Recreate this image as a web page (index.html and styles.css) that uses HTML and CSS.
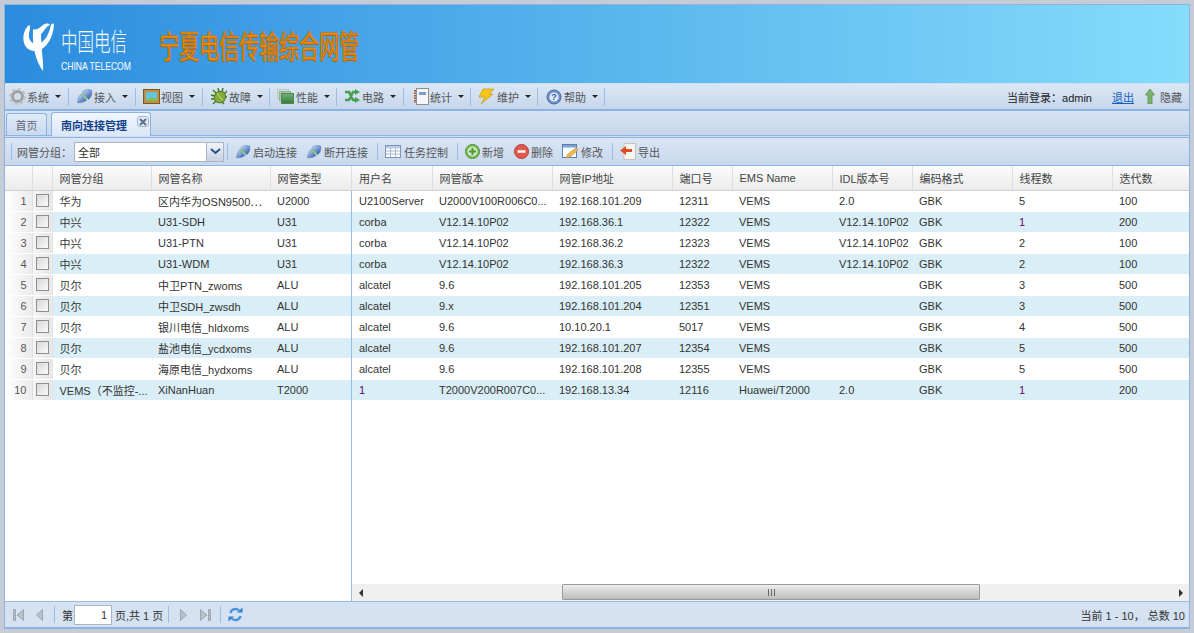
FILE: index.html
```html
<!DOCTYPE html>
<html>
<head>
	<meta charset="UTF-8">
	<title>宁夏电信传输综合网管</title>
	<link rel="stylesheet" href="styles.css">
</head>
<body>
	<svg class="defs" width="0" height="0">
		<defs>
			<linearGradient id="plugFill" x1="0" y1="0" x2="0" y2="1">
				<stop offset="0" stop-color="#b4cdf0"/>
				<stop offset="1" stop-color="#3f68ad"/>
			</linearGradient>
			<linearGradient id="stackFill" x1="0" y1="0" x2="0" y2="1">
				<stop offset="0" stop-color="#78b078"/>
				<stop offset="1" stop-color="#2f7a3a"/>
			</linearGradient>
			<symbol id="plug" viewBox="0 0 18 18">
				<g transform="rotate(-42 9 9)">
					<path d="M-1 9 C2 6.5 4 5 8 4.5 V13.5 C4 13 2 11.5 -1 9 Z" fill="url(#plugFill)" stroke="#5c7fb8" stroke-width=".5"/>
					<path d="M10 4 C14 3.5 17 5.5 19 9 C17 12.5 14 14.5 10 14 Z" fill="url(#plugFill)" stroke="#4d72ae" stroke-width=".5"/>
					<rect x="8" y="5" width="2" height="8" fill="#86c880"/>
				</g>
			</symbol>
		</defs>
	</svg>
	<div class="frame">
		<header class="banner">
			<div class="logo">
				<svg class="logo-mark" width="31" height="50" viewBox="0 0 31 50">
					<path d="M6 3 C0 8 -1.500 19 3 25 C7 30 14 30 19 27 C25 23 30 15 31 3 C31 1 29 1 28 3 C26 12 22 20 15 22 C9 23 5 18 6 11 C7 7 8 4 6 3 Z" fill="#fff"/>
					<path d="M10 9 C9 24 13 40 20 49 C21 42 18 28 18 10 Z" fill="#fff"/>
					<path d="M10 7 C14 9 17 5 20 3 C23 1 26 1 27 3 C24 4 22 7 20 10 C17 14 10 14 10 7 Z" fill="#fff"/>
				</svg>
				<div class="logo-text">
					<span class="logo-cn">中国电信</span>
					<span class="logo-en">CHINA TELECOM</span>
				</div>
			</div>
			<h1 class="app-title">宁夏电信传输综合网管</h1>
		</header>

		<nav class="menubar">
			<div class="menu-item">
				<svg class="ico" width="17" height="17" viewBox="0 0 17 17"><circle cx="8.500" cy="8.500" r="5" fill="none" stroke="#a0a0a0" stroke-width="3"/><circle cx="8.500" cy="8.500" r="7" fill="none" stroke="#bcbcbc" stroke-width="2.600" stroke-dasharray="2.600 2.900"/><circle cx="8.500" cy="8.500" r="2" fill="#d4dce6"/></svg>
				<span>系统</span><i class="caret"></i>
			</div>
			<div class="menu-item">
				<svg class="ico" width="17" height="17"><use href="#plug"/></svg>
				<span>接入</span><i class="caret"></i>
			</div>
			<div class="menu-item">
				<svg class="ico" width="17" height="15" viewBox="0 0 17 15"><rect x=".5" y=".5" width="16" height="14" fill="#c08f45" stroke="#7a5a22"/><rect x="3" y="3" width="11" height="9" fill="#63c4dc"/><path d="M3 12 C6 8 9 8 14 10 V12 Z" fill="#7fc04a"/></svg>
				<span>视图</span><i class="caret"></i>
			</div>
			<div class="menu-item">
				<svg class="ico" width="18" height="17" viewBox="0 0 18 17"><path d="M1 7 L5 8 M1 11 L5 11 M3 16 L6 13 M3 2 L6 5 M8 0 L9 4 M13 0 L12 4 M17 3 L14 6 M17 9 L15 9 M14 16 L12 14" stroke="#3f7a22" stroke-width="1.400" fill="none"/><ellipse cx="10" cy="9" rx="5.500" ry="6" transform="rotate(35 10 9)" fill="#86ad3c" stroke="#4d7a1c"/><path d="M7 5 L13 13" stroke="#c0d480" stroke-width="1"/></svg>
				<span>故障</span><i class="caret"></i>
			</div>
			<div class="menu-item">
				<svg class="ico" width="18" height="15" viewBox="0 0 18 15"><rect x=".5" y=".5" width="11" height="9" fill="#d4e2dc" stroke="#b4c8c0"/><rect x="2.500" y="2.500" width="11" height="9" fill="#a8c8b0" stroke="#90b09c"/><rect x="4.500" y="4.500" width="12" height="10" fill="url(#stackFill)" stroke="#4c8a54"/></svg>
				<span>性能</span><i class="caret"></i>
			</div>
			<div class="menu-item">
				<svg class="ico" width="17" height="15" viewBox="0 0 17 15"><path d="M1 3 H5 L9 11 H12 M1 11 H5 L9 3 H12" fill="none" stroke="#45a052" stroke-width="2.600"/><path d="M11 0 L16 3 L11 6 Z M11 8 L16 11 L11 14 Z" fill="#45a052"/></svg>
				<span>电路</span><i class="caret"></i>
			</div>
			<div class="menu-item">
				<svg class="ico" width="18" height="17" viewBox="-3 0 18 17"><rect x="2.500" y=".5" width="12" height="16" fill="#f4f6fa" stroke="#8d8d8d"/><rect x="5" y="4" width="7" height="3" fill="#7e9ccc"/><path d="M1 2 V15" stroke="#a0562a" stroke-width="2" stroke-dasharray="1.500 1"/></svg>
				<span>统计</span><i class="caret"></i>
			</div>
			<div class="menu-item">
				<svg class="ico" width="18" height="17" viewBox="0 0 18 17"><path d="M5 1 H16 L11 6 H15 L3 16 L7 9 H1 Z" fill="#f5c518" stroke="#c99512" stroke-width=".7"/></svg>
				<span>维护</span><i class="caret"></i>
			</div>
			<div class="menu-item">
				<svg class="ico" width="18" height="16" viewBox="-1 0 18 16"><circle cx="8" cy="8" r="7" fill="#6f93c8" stroke="#4668a3"/><circle cx="8" cy="8" r="4.600" fill="#dfe9f6"/><text x="8" y="11" class="help-mark">?</text></svg>
				<span>帮助</span><i class="caret"></i>
			</div>
			<div class="login">
				<span class="login-user">当前登录：admin</span>
				<a class="logout" href="#">退出</a>
				<svg class="hide-arrow" width="10" height="15" viewBox="0 0 10 15"><path d="M5 0 L9.500 6 H7 V15 H3 V6 H.5 Z" fill="#7db46c" stroke="#4d8a3e" stroke-width=".7"/></svg>
				<span>隐藏</span>
			</div>
		</nav>

		<div class="tabbar">
			<div class="tab">首页</div>
			<div class="tab tab-active">
				<span>南向连接管理</span>
				<span class="tab-close">
					<svg width="8" height="8" viewBox="0 0 8 8"><path d="M1 1 L7 7 M7 1 L1 7" stroke="#5b6f8e" stroke-width="2"/></svg>
				</span>
			</div>
		</div>

		<section class="panel">
			<div class="grid-toolbar">
				<i class="sep sep-first"></i>
				<label class="combo-label">网管分组：</label>
				<div class="combo">
					<span class="combo-value">全部</span>
					<span class="combo-btn"><svg width="11" height="7" viewBox="0 0 11 7"><path d="M1 1 L5.500 5 L10 1" fill="none" stroke="#2f4f86" stroke-width="2"/></svg></span>
				</div>
				<i class="sep"></i>
				<button class="tool" type="button"><svg width="16" height="16"><use href="#plug"/></svg>启动连接</button>
				<button class="tool" type="button"><svg width="16" height="16"><use href="#plug"/></svg>断开连接</button>
				<i class="sep"></i>
				<button class="tool" type="button"><svg width="17" height="13" viewBox="0 0 17 13"><rect x=".5" y=".5" width="15" height="12" fill="#fff" stroke="#7c93b8"/><rect x="1" y="1" width="14" height="2.500" fill="#b9cbe6"/><path d="M1 6 H15 M1 9 H15 M5.500 3 V12 M10.500 3 V12" stroke="#a5b6d0"/></svg>任务控制</button>
				<i class="sep"></i>
				<button class="tool" type="button"><svg width="15" height="15" viewBox="0 0 15 15"><circle cx="7.500" cy="7.500" r="7" fill="#79b856" stroke="#4f8f38"/><circle cx="7.500" cy="7.500" r="5" fill="#cfe8bf"/><path d="M7.500 4 V11 M4 7.500 H11" stroke="#4f9a38" stroke-width="2"/></svg>新增</button>
				<button class="tool" type="button"><svg width="16" height="15" viewBox="-1 0 16 15"><circle cx="7.500" cy="7.500" r="7" fill="#e0594f" stroke="#b83a32"/><path d="M3.500 7.500 H11.500" stroke="#fff" stroke-width="2.400"/></svg>删除</button>
				<button class="tool" type="button"><svg width="17" height="16" viewBox="0 0 17 16"><rect x=".5" y=".5" width="14" height="13" fill="#fdfdfd" stroke="#5b7fb4"/><rect x="1" y="1" width="13" height="2.500" fill="#7fa3d6"/><path d="M4 14 L6 10 L14 4 L16 6 L8 13 Z" fill="#eebd55" stroke="#b58a2c" stroke-width=".7"/></svg>修改</button>
				<i class="sep"></i>
				<button class="tool" type="button"><svg width="16" height="17" viewBox="0 0 16 17"><path d="M4 .5 H15.500 V16.500 H4 Z" fill="#f4f4f0" stroke="#c4c4bc"/><path d="M0 7.500 L6 3 V6 H12 V9 H6 V12 Z" fill="#e0501f"/></svg>导出</button>
			</div>

			<div class="grid">
				<div class="grid-frozen">
					<table class="data data-frozen">
						<colgroup><col class="w-num"><col class="w-check"><col class="w-99"><col class="w-119"><col class="w-81"></colgroup>
						<thead><tr><th></th><th></th><th>网管分组</th><th>网管名称</th><th>网管类型</th></tr></thead>
						<tbody>
							<tr><td class="rownum">1</td><td class="check"><i class="box"></i></td><td>华为</td><td>区内华为OSN9500⋯</td><td>U2000</td></tr>
							<tr><td class="rownum">2</td><td class="check"><i class="box"></i></td><td>中兴</td><td>U31-SDH</td><td>U31</td></tr>
							<tr><td class="rownum">3</td><td class="check"><i class="box"></i></td><td>中兴</td><td>U31-PTN</td><td>U31</td></tr>
							<tr><td class="rownum">4</td><td class="check"><i class="box"></i></td><td>中兴</td><td>U31-WDM</td><td>U31</td></tr>
							<tr><td class="rownum">5</td><td class="check"><i class="box"></i></td><td>贝尔</td><td>中卫PTN_zwoms</td><td>ALU</td></tr>
							<tr><td class="rownum">6</td><td class="check"><i class="box"></i></td><td>贝尔</td><td>中卫SDH_zwsdh</td><td>ALU</td></tr>
							<tr><td class="rownum">7</td><td class="check"><i class="box"></i></td><td>贝尔</td><td>银川电信_hldxoms</td><td>ALU</td></tr>
							<tr><td class="rownum">8</td><td class="check"><i class="box"></i></td><td>贝尔</td><td>盐池电信_ycdxoms</td><td>ALU</td></tr>
							<tr><td class="rownum">9</td><td class="check"><i class="box"></i></td><td>贝尔</td><td>海原电信_hydxoms</td><td>ALU</td></tr>
							<tr><td class="rownum">10</td><td class="check"><i class="box"></i></td><td>VEMS（不监控-...</td><td>XiNanHuan</td><td>T2000</td></tr>
						</tbody>
					</table>
				</div>
				<div class="grid-main">
					<div class="grid-scroll">
						<table class="data data-main">
							<colgroup><col class="w-80"><col class="w-120"><col class="w-120"><col class="w-60"><col class="w-100"><col class="w-80"><col class="w-100"><col class="w-100"><col class="w-77"></colgroup>
							<thead><tr><th>用户名</th><th>网管版本</th><th>网管IP地址</th><th>端口号</th><th>EMS Name</th><th>IDL版本号</th><th>编码格式</th><th>线程数</th><th>迭代数</th></tr></thead>
							<tbody>
								<tr><td>U2100Server</td><td>U2000V100R006C0...</td><td>192.168.101.209</td><td>12311</td><td>VEMS</td><td>2.0</td><td>GBK</td><td>5</td><td>100</td></tr>
								<tr><td>corba</td><td>V12.14.10P02</td><td>192.168.36.1</td><td>12322</td><td>VEMS</td><td>V12.14.10P02</td><td>GBK</td><td class="mark">1</td><td>200</td></tr>
								<tr><td>corba</td><td>V12.14.10P02</td><td>192.168.36.2</td><td>12323</td><td>VEMS</td><td>V12.14.10P02</td><td>GBK</td><td>2</td><td>100</td></tr>
								<tr><td>corba</td><td>V12.14.10P02</td><td>192.168.36.3</td><td>12322</td><td>VEMS</td><td>V12.14.10P02</td><td>GBK</td><td>2</td><td>100</td></tr>
								<tr><td>alcatel</td><td>9.6</td><td>192.168.101.205</td><td>12353</td><td>VEMS</td><td></td><td>GBK</td><td>3</td><td>500</td></tr>
								<tr><td>alcatel</td><td>9.x</td><td>192.168.101.204</td><td>12351</td><td>VEMS</td><td></td><td>GBK</td><td>3</td><td>500</td></tr>
								<tr><td>alcatel</td><td>9.6</td><td>10.10.20.1</td><td>5017</td><td>VEMS</td><td></td><td>GBK</td><td>4</td><td>500</td></tr>
								<tr><td>alcatel</td><td>9.6</td><td>192.168.101.207</td><td>12354</td><td>VEMS</td><td></td><td>GBK</td><td>5</td><td>500</td></tr>
								<tr><td>alcatel</td><td>9.6</td><td>192.168.101.208</td><td>12355</td><td>VEMS</td><td></td><td>GBK</td><td>5</td><td>500</td></tr>
								<tr><td class="mark">1</td><td>T2000V200R007C0...</td><td>192.168.13.34</td><td>12116</td><td>Huawei/T2000</td><td>2.0</td><td>GBK</td><td class="mark">1</td><td>200</td></tr>
							</tbody>
						</table>
					</div>
					<div class="hscroll">
						<span class="hscroll-btn"><i class="arrow-left"></i></span>
						<div class="hscroll-track"><div class="hscroll-thumb"><span class="grip"></span></div></div>
						<span class="hscroll-btn"><i class="arrow-right"></i></span>
					</div>
				</div>
			</div>

			<footer class="pager">
				<svg class="page-first" width="11" height="12" viewBox="0 0 11 12"><path d="M.5 .5 H2.500 V11.500 H.5 Z M10.500 .5 V11.500 L4 6 Z" fill="#b8c0c8" stroke="#8b95a0" stroke-width=".7"/></svg>
				<svg class="page-prev" width="7" height="12" viewBox="0 0 7 12"><path d="M6.500 .5 V11.500 L.5 6 Z" fill="#b8c0c8" stroke="#8b95a0" stroke-width=".7"/></svg>
				<i class="sep sep-prev"></i>
				<span>第</span>
				<input class="page-input" type="text" value="1">
				<span class="page-total">页,共 1 页</span>
				<i class="sep sep-total"></i>
				<svg class="page-next" width="7" height="12" viewBox="0 0 7 12"><path d="M.5 .5 V11.500 L6.500 6 Z" fill="#b8c0c8" stroke="#8b95a0" stroke-width=".7"/></svg>
				<svg class="page-last" width="11" height="12" viewBox="0 0 11 12"><path d="M10.500 .5 H8.500 V11.500 H10.500 Z M.5 .5 V11.500 L7 6 Z" fill="#b8c0c8" stroke="#8b95a0" stroke-width=".7"/></svg>
				<i class="sep sep-last"></i>
				<svg class="page-refresh" width="15" height="15" viewBox="0 0 15 15"><path d="M2.500 6 A5 5 0 0 1 11 3.500 M12.500 9 A5 5 0 0 1 4 11.500" fill="none" stroke="#4a92dc" stroke-width="2.400"/><path d="M9 5.500 H14.500 V0.5 Z M6 9.500 H.5 V14.500 Z" fill="#2f7fd0"/></svg>
				<span class="page-info">当前 1 - 10， 总数 10</span>
			</footer>
		</section>
	</div>
</body>
</html>
```

FILE: styles.css
```css
* {
	box-sizing: border-box;
}
html, body {
	height: 100%;
}
body {
	margin: 0;
	padding: 4px;
	overflow: hidden;
	background-color: #c6ccd6;
	font-family: "Liberation Sans", "Noto Sans CJK SC", sans-serif;
	font-size: 11px;
	color: #333;
}
.defs {
	display: block;
	height: 0;
}
.frame {
	display: flex;
	flex-direction: column;
	height: 100%;
	border: 1px solid #8db2e3;
	background-color: #cfdff2;
}

/* banner */
.banner {
	display: flex;
	align-items: center;
	flex: none;
	height: 78px;
	background: linear-gradient(to right, #2b8cdf, #86dcfb);
}
.logo {
	display: flex;
	align-items: center;
	margin-left: 18px;
	width: 136px;
}
.logo-mark {
	flex: none;
	margin-top: 6px;
}
.logo-text {
	display: flex;
	flex-direction: column;
	width: 66px;
	margin: 14px 0 0 7px;
	color: #fff;
}
.logo-cn {
	font-size: 25px;
	line-height: 26px;
	font-weight: 300;
	white-space: nowrap;
	transform: scaleX(.66);
	transform-origin: left center;
}
.logo-en {
	margin-top: 4px;
	font-size: 11px;
	line-height: 14px;
	white-space: nowrap;
	transform: scaleX(.78);
	transform-origin: left center;
}
.app-title {
	margin: 0;
	font-size: 32px;
	font-weight: normal;
	white-space: nowrap;
	color: #ee8a04;
	-webkit-text-stroke: .5px #c06d05;
	text-shadow: 1px 1px 0 #a86508;
	transform: scaleX(.625);
	transform-origin: left center;
}

/* main menu */
.menubar {
	display: flex;
	align-items: center;
	flex: none;
	height: 27px;
	margin-top: 1px;
	border-bottom: 2px solid #8db2e3;
	background: linear-gradient(to bottom, #dbe7f5, #c6d6eb);
}
.menu-item {
	display: flex;
	align-items: center;
	flex: none;
	width: 67px;
	height: 18px;
	padding-left: 7px;
	border-right: 1px solid #9dbde6;
	color: #555;
}
.menu-item:first-child {
	width: 64px;
	padding-left: 4px;
}
.ico {
	flex: none;
	margin-right: 1px;
}
.help-mark {
	font-size: 9px;
	font-weight: bold;
	fill: #3a5c9c;
	text-anchor: middle;
}
.caret {
	display: block;
	width: 0;
	height: 0;
	margin-left: 6px;
	border-left: 3px solid transparent;
	border-right: 3px solid transparent;
	border-top: 3px solid #222;
}
.login {
	display: flex;
	align-items: center;
	margin-left: auto;
	padding-right: 7px;
	color: #555;
}
.login-user {
	color: #222;
}
.logout {
	margin-left: 20px;
	color: #1560c4;
}
.hide-arrow {
	margin: 0 5px 0 11px;
}

/* tabs */
.tabbar {
	display: flex;
	align-items: flex-end;
	flex: none;
	height: 25px;
	padding-left: 1px;
	gap: 4px;
	background: linear-gradient(to bottom, #d6e3f3, #c6d7ec);
	border-bottom: 1px solid #8db2e3;
}
.tab {
	display: flex;
	align-items: center;
	justify-content: center;
	width: 41px;
	height: 22px;
	border: 1px solid #8db2e3;
	border-bottom: none;
	border-radius: 3px 3px 0 0;
	background: linear-gradient(to bottom, #dfeaf7, #c9d9ee);
	color: #667;
}
.tab-active {
	width: 100px;
	height: 24px;
	margin-bottom: -1px;
	gap: 10px;
	justify-content: flex-start;
	padding-left: 9px;
	background: linear-gradient(to bottom, #f0f6fd, #dae7f8);
	color: #15428b;
	font-weight: bold;
}
.tab-close {
	display: flex;
	align-items: center;
	justify-content: center;
	width: 12px;
	height: 11px;
	margin-top: -6px;
	border: 1px solid #a4b8d4;
	border-radius: 3px;
	background-color: #e3ebf6;
}

/* grid panel */
.panel {
	display: flex;
	flex-direction: column;
	flex: 1;
	min-height: 0;
	margin-top: 1px;
	border-top: 1px solid #8db2e3;
	border-bottom: 1px solid #8db2e3;
}
.grid-toolbar {
	display: flex;
	align-items: center;
	flex: none;
	height: 28px;
	padding-left: 6px;
	border-bottom: 1px solid #8db2e3;
	background: linear-gradient(to bottom, #dae6f5, #c8d8ed);
	color: #555;
}
.sep {
	display: block;
	flex: none;
	width: 1px;
	height: 17px;
	background-color: #9dbde6;
}
.grid-toolbar .sep {
	margin-right: 7px;
}
.grid-toolbar .sep-first {
	margin-right: 5px;
}
.combo-label {
	width: 57px;
}
.combo {
	display: flex;
	flex: none;
	width: 150px;
	height: 20px;
	border: 1px solid #a9b5c6;
	background-color: #fff;
}
.combo-value {
	flex: 1;
	padding: 1px 3px;
	color: #333;
}
.combo-btn {
	display: flex;
	align-items: center;
	justify-content: center;
	width: 17px;
	border-left: 1px solid #a9b5c6;
	background: linear-gradient(to bottom, #f0f3f8, #c8d2e2);
}
.combo + .sep {
	margin-left: 3px;
}
.tool {
	display: flex;
	align-items: center;
	gap: 2px;
	margin: 0 9px 0 0;
	padding: 0;
	border: none;
	background: none;
	font: inherit;
	color: #555;
	cursor: pointer;
}

/* data tables */
.grid {
	display: flex;
	flex: 1;
	min-height: 0;
	background-color: #fff;
}
.grid-frozen {
	flex: none;
	width: 347px;
	border-right: 1px solid #99bbe8;
}
.grid-main {
	display: flex;
	flex-direction: column;
	flex: 1;
	min-width: 0;
}
.grid-scroll {
	flex: 1;
	overflow: hidden;
}
.data {
	table-layout: fixed;
	border-collapse: collapse;
}
.data-frozen {
	width: 346px;
}
.data-main {
	width: 837px;
}
.w-num { width: 27px; }
.w-check { width: 20px; }
.w-60 { width: 60px; }
.w-77 { width: 77px; }
.w-80 { width: 80px; }
.w-81 { width: 81px; }
.w-99 { width: 99px; }
.w-100 { width: 100px; }
.w-119 { width: 119px; }
.w-120 { width: 120px; }
.data th {
	height: 24px;
	padding: 0 0 0 7px;
	border-right: 1px solid #dcdfe3;
	border-bottom: 1px solid #d0d0d0;
	background: linear-gradient(to bottom, #fbfbfb, #ebebeb);
	font-weight: normal;
	text-align: left;
	color: #444;
	white-space: nowrap;
}
.data td {
	height: 21px;
	padding: 0 0 0 7px;
	border-bottom: 1px solid #fff;
	white-space: nowrap;
	overflow: hidden;
	color: #333;
}
.data tbody tr:nth-child(even) td {
	background-color: #d9eef6;
}
.data td.rownum, .data tbody tr:nth-child(even) td.rownum {
	padding: 0 5px 0 0;
	border-right: 1px solid #e0e0e0;
	background: linear-gradient(to right, #fff, #ebebeb);
	text-align: right;
	color: #555;
}
.data td.check, .data tbody tr:nth-child(even) td.check {
	padding: 0 0 0 3px;
	border-right: 1px solid #e0e0e0;
	background: linear-gradient(to right, #f5f5f5, #e6e6e6);
}
.box {
	display: block;
	width: 13px;
	height: 13px;
	border: 1px solid #8e8f8f;
	background: linear-gradient(135deg, #d8d8d8, #fafafa);
}
.data td.mark {
	color: #660066;
}

/* horizontal scrollbar */
.hscroll {
	display: flex;
	flex: none;
	height: 17px;
	background-color: #f0f0f0;
}
.hscroll-btn {
	display: flex;
	align-items: center;
	justify-content: center;
	flex: none;
	width: 17px;
}
.arrow-left, .arrow-right {
	display: block;
	width: 0;
	height: 0;
	border-top: 4px solid transparent;
	border-bottom: 4px solid transparent;
}
.arrow-left {
	border-right: 4px solid #333;
}
.arrow-right {
	border-left: 4px solid #333;
}
.hscroll-track {
	flex: 1;
	padding-left: 193px;
}
.hscroll-thumb {
	display: flex;
	align-items: center;
	justify-content: center;
	width: 418px;
	height: 16px;
	border: 1px solid #9a9a9a;
	border-radius: 1px;
	background: linear-gradient(to bottom, #ececec, #bdbdbd);
}
.grip {
	display: block;
	width: 7px;
	height: 7px;
	background: repeating-linear-gradient(to right, #666 0 1px, transparent 1px 3px);
}

/* pager */
.pager {
	display: flex;
	align-items: center;
	flex: none;
	height: 26px;
	padding-left: 8px;
	border-top: 1px solid #99bbe8;
	background-color: #d5e2f2;
	color: #333;
}
.page-prev {
	margin-left: 12px;
}
.sep-prev {
	margin: 0 7px 0 11px;
}
.page-input {
	width: 38px;
	height: 20px;
	margin: 0 3px 0 1px;
	padding: 0 4px;
	border: 1px solid #a9b5c6;
	background-color: #fff;
	font: inherit;
	color: #333;
	text-align: right;
}
.sep-total {
	margin: 0 11px 0 5px;
}
.page-last {
	margin-left: 13px;
}
.sep-last {
	margin: 0 7px 0 9px;
}
.page-info {
	margin-left: auto;
	padding-right: 4px;
}
```
